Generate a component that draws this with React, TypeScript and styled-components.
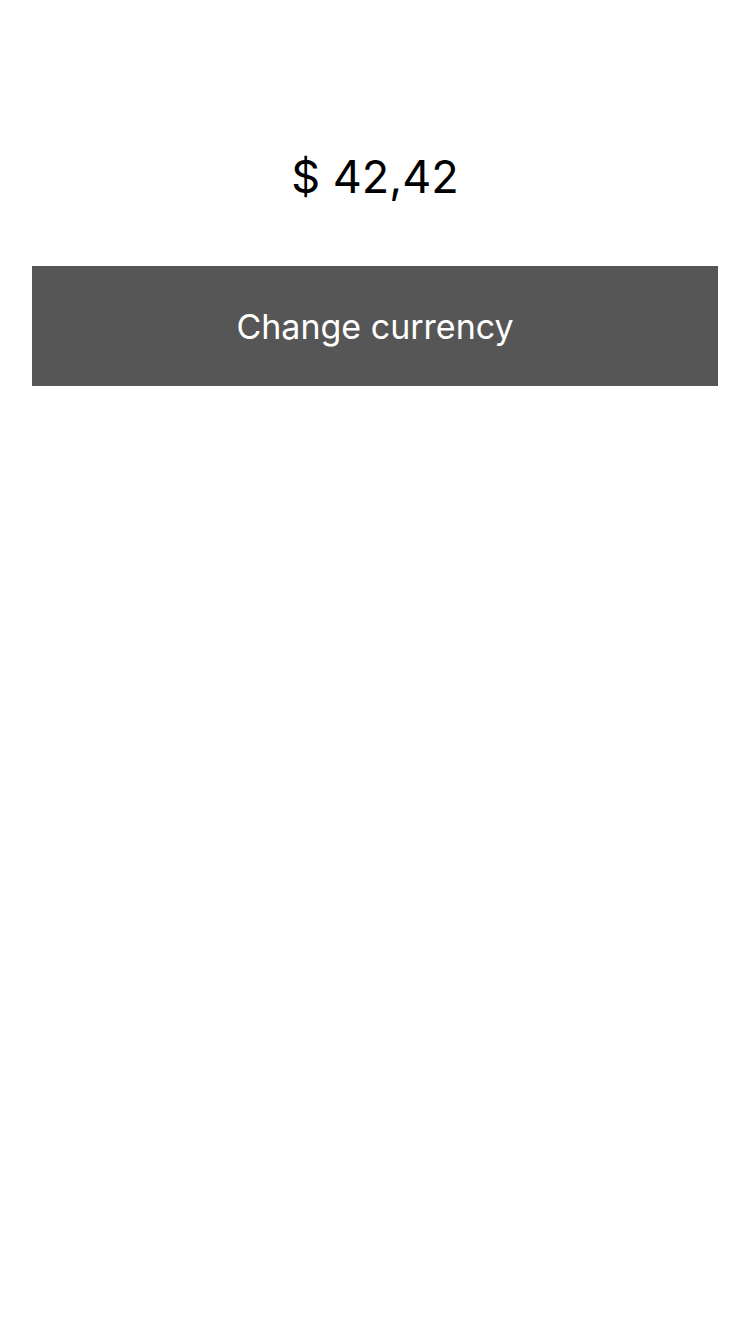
import React from "react";
import styled, { createGlobalStyle } from "styled-components";

const Global = createGlobalStyle`
  html, body { margin: 0; padding: 0; background: #fff; }
  body { font-family: Inter, "Noto Sans", sans-serif; }
`;

const Screen = styled.div`
  width: 750px;
  min-height: 1334px;
  display: flex;
  flex-direction: column;
  align-items: center;
  background: #fff;
`;

const Price = styled.div`
  margin-top: 147px;
  height: 60px;
  display: flex;
  align-items: center;
  font-size: 45px;
  line-height: 60px;
  color: #000;
`;

const Button = styled.button`
  margin-top: 59px;
  width: 686px;
  height: 120px;
  border: none;
  border-radius: 0;
  background: #565656;
  color: #fff;
  font-family: Inter, "Noto Sans", sans-serif;
  font-size: 34px;
  display: flex;
  align-items: center;
  justify-content: center;
  padding: 0;
`;

export default function App() {
  return (
    <>
      <Global />
      <Screen>
        <Price>$ 42,42</Price>
        <Button>Change currency</Button>
      </Screen>
    </>
  );
}
